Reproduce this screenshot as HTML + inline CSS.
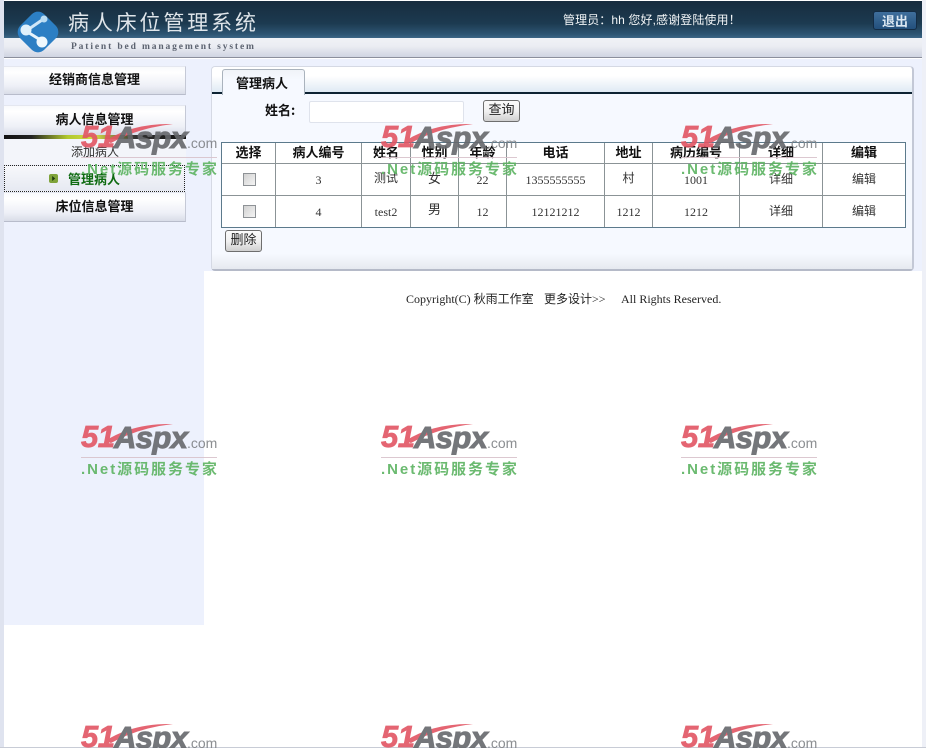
<!DOCTYPE html>
<html><head><meta charset="utf-8"><style>
*{box-sizing:border-box}
html,body{margin:0;padding:0;width:926px;height:748px;overflow:hidden;background:#fff}
body{position:relative;font-family:"Liberation Serif","Noto Serif CJK SC","Noto Sans CJK SC",serif;font-size:12px;color:#222}
.a{position:absolute}
.t{position:absolute;white-space:nowrap;font-family:"Liberation Sans","WenQuanYi Zen Hei","Noto Sans CJK SC",sans-serif}
.m{position:absolute;left:4px;width:182px;background:linear-gradient(#f8f9fc,#fff 20%,#eef0f7 70%,#d9dde8);border-right:1px solid #c5c9d6;border-bottom:1px solid #b8bccb;border-top:1px solid #e4e7f0;text-align:center;font-weight:bold;font-size:13px;color:#111;font-family:"Liberation Sans","Noto Sans CJK SC",sans-serif}
.l{position:absolute;background:#8b9396}
.c{position:absolute;text-align:center;font-size:12px;color:#333;white-space:nowrap;height:16px;line-height:16px;font-family:"Liberation Serif","WenQuanYi Zen Hei","Noto Sans CJK SC",serif}
.h{position:absolute;top:145px;height:16px;line-height:16px;text-align:center;font-weight:bold;font-size:13px;color:#111;white-space:nowrap;font-family:"Liberation Sans","Noto Sans CJK SC",sans-serif}
.cb{position:absolute;width:13px;height:13px;left:243px;background:linear-gradient(135deg,#d2d2d2,#f4f4f4);border:1px solid #8e9296}
.btn{position:absolute;height:22px;border:1px solid #6e6e6e;border-radius:3px;background:linear-gradient(#fbfbfb,#f1f1f1 50%,#cfcfcf);text-align:center;font-size:13px;line-height:16px;color:#222;font-family:"WenQuanYi Zen Hei","Noto Sans CJK SC",sans-serif}
.w{position:absolute;width:142px;height:56px;pointer-events:none;opacity:.9}
.w span{position:absolute;white-space:nowrap;font-family:"Liberation Sans","Noto Sans CJK SC",sans-serif}
.w .n{left:0;top:-5px;font-size:31px;font-weight:bold;font-style:italic;color:#e25563;letter-spacing:-.5px;-webkit-text-stroke:.7px #e25563}
.w .x{left:33px;top:-4px;font-size:31px;font-weight:bold;font-style:italic;color:#66686c;letter-spacing:-.6px;-webkit-text-stroke:1px #66686c}
.w .o{left:106px;top:11px;font-size:14px;color:#7f8286}
.w .g{left:0;top:34px;font-size:15px;font-weight:bold;color:#5cb361;letter-spacing:1.95px}
.w i{position:absolute;left:0;top:33px;width:136px;height:1px;background:#d9c3cc}
.w svg{position:absolute;left:22px;top:-1px}
</style></head><body>
<div class="a" style="left:0;top:0;width:4px;height:748px;background:#dfe3ef"></div>
<div class="a" style="left:922px;top:0;width:4px;height:748px;background:#eef0f7"></div>
<div class="a" style="left:4px;top:59px;width:200px;height:566px;background:#edf1fd"></div>
<div class="a" style="left:204px;top:59px;width:718px;height:212px;background:#edf1fd"></div>
<div class="a" style="left:0;top:747px;width:926px;height:1px;background:#c8ccd6"></div>

<div class="a" style="left:4px;top:1px;width:918px;height:37px;background:linear-gradient(#172c3e,#1c3a50 60%,#2d5573 90%,#3c6686)"></div>
<div class="a" style="left:4px;top:38px;width:918px;height:20px;background:linear-gradient(#f0f2f6,#ebedf3 40%,#cdd2e0)"></div>
<div class="a" style="left:4px;top:57px;width:918px;height:1px;background:#8b8f9c"></div>
<svg class="a" style="left:15px;top:10px" width="46" height="44" viewBox="0 0 46 44">
<rect x="6" y="5" width="34" height="34" rx="9" transform="rotate(45 23 22)" fill="#2c7fc4"/>
<path d="M11 21L30 8" stroke="#cfe6f7" stroke-width="3"/><path d="M11 21L27 31" stroke="#e8f4fb" stroke-width="3"/>
<circle cx="11" cy="20" r="5.5" fill="#dff0fb"/><circle cx="29" cy="9" r="3.5" fill="#b9dcf3"/><circle cx="27" cy="32" r="5.5" fill="#eef8fd"/>
</svg>
<div class="t" style="left:68px;top:9px;font-size:21px;line-height:26px;color:#dfe5ea;letter-spacing:2.85px;font-family:'Noto Sans CJK SC',sans-serif">病人床位管理系统</div>
<div class="t" style="left:71px;top:41px;font-size:9.5px;line-height:12px;color:#5c6370;letter-spacing:1.87px;font-family:'Liberation Serif',serif;font-weight:bold">Patient bed management system</div>
<div class="t" style="left:563px;top:12px;font-size:12px;line-height:16px;color:#f2f5f7;letter-spacing:.1px">管理员：hh 您好,感谢登陆使用！</div>
<div class="a" style="left:873px;top:11px;width:44px;height:19px;border:1px solid #132c45;border-radius:3px;background:linear-gradient(#3f6f9d,#23507c);color:#dce8f2;text-align:center;font-size:13px;line-height:17px;font-weight:bold;font-family:'Noto Sans CJK SC',sans-serif">退出</div>

<div class="m" style="top:66px;height:29px;line-height:25px">经销商信息管理</div>
<div class="m" style="top:105px;height:30px;line-height:27px;border-bottom:0">病人信息管理</div>
<div class="a" style="left:4px;top:135px;width:182px;height:4px;background:linear-gradient(90deg,#111 0,#222 15%,#b2c92e 35%,#d3dc48 50%,#333 72%,#111 100%)"></div>
<div class="a" style="left:4px;top:139px;width:182px;height:26px;background:#f3f5fa"></div>
<div class="t" style="left:71px;top:144px;font-size:12px;line-height:16px;color:#333">添加病人</div>
<div class="a" style="left:4px;top:165px;width:181px;height:27px;border:1px dotted #222;background:linear-gradient(#f7f8fb,#e6e9f2)"></div>
<svg class="a" style="left:49px;top:174px" width="9" height="9" viewBox="0 0 9 9"><rect width="9" height="9" rx="2" fill="#7fa33a"/><path d="M3.2 2L6.2 4.5L3.2 7Z" fill="#1f3a10"/></svg>
<div class="t" style="left:68px;top:170px;font-size:13px;line-height:17px;font-weight:bold;color:#0f6b12;font-family:'Noto Sans CJK SC',sans-serif">管理病人</div>
<div class="m" style="top:192px;height:30px;line-height:27px">床位信息管理</div>

<div class="a" style="left:211px;top:66px;width:703px;height:205px;background:#f6f9ff;border:1px solid #d5d9e4;border-right:2px solid #c3c8d6;border-bottom:2px solid #b5bac8;border-radius:4px"></div>
<div class="a" style="left:212px;top:67px;width:700px;height:25px;background:linear-gradient(#fff,#fff 35%,#dfeaf4);border-radius:3px 3px 0 0"></div>
<div class="a" style="left:212px;top:92px;width:700px;height:2px;background:#0d2333"></div>
<div class="a" style="left:212px;top:254px;width:700px;height:15px;background:linear-gradient(#f6f9ff,#e6e9f0)"></div>
<div class="a" style="left:222px;top:69px;width:83px;height:26px;background:linear-gradient(#f0f3f8,#f6f9ff 40%);border:1px solid #aab3bd;border-bottom:0;border-radius:3px 3px 0 0"></div>
<div class="t" style="left:236px;top:74px;font-size:13px;line-height:17px;font-weight:bold;color:#111;font-family:'Noto Sans CJK SC',sans-serif">管理病人</div>
<div class="t" style="left:265px;top:101px;font-size:13px;line-height:17px;font-weight:bold;color:#111;font-family:'Noto Sans CJK SC',sans-serif">姓名:</div>
<div class="a" style="left:309px;top:101px;width:155px;height:22px;background:#fff;border:1px solid #dfe3ec;border-radius:2px"></div>
<div class="btn" style="left:483px;top:100px;width:37px">查询</div>

<div class="a" style="left:221px;top:142px;width:685px;height:86px;background:#fff;border:1px solid #5c7a8c"></div>
<div class="l" style="left:222px;top:163px;width:683px;height:1px"></div>
<div class="l" style="left:222px;top:195px;width:683px;height:1px"></div>
<div class="l" style="left:275px;top:143px;width:1px;height:84px"></div>
<div class="l" style="left:361px;top:143px;width:1px;height:84px"></div>
<div class="l" style="left:410px;top:143px;width:1px;height:84px"></div>
<div class="l" style="left:458px;top:143px;width:1px;height:84px"></div>
<div class="l" style="left:506px;top:143px;width:1px;height:84px"></div>
<div class="l" style="left:604px;top:143px;width:1px;height:84px"></div>
<div class="l" style="left:652px;top:143px;width:1px;height:84px"></div>
<div class="l" style="left:739px;top:143px;width:1px;height:84px"></div>
<div class="l" style="left:822px;top:143px;width:1px;height:84px"></div>

<div class="h" style="left:222px;width:53px">选择</div>
<div class="h" style="left:276px;width:85px">病人编号</div>
<div class="h" style="left:362px;width:48px">姓名</div>
<div class="h" style="left:411px;width:47px">性别</div>
<div class="h" style="left:459px;width:47px">年龄</div>
<div class="h" style="left:507px;width:97px">电话</div>
<div class="h" style="left:605px;width:47px">地址</div>
<div class="h" style="left:653px;width:86px">病历编号</div>
<div class="h" style="left:740px;width:82px">详细</div>
<div class="h" style="left:823px;width:82px">编辑</div>

<div class="cb" style="top:173px"></div>
<div class="c" style="left:276px;width:85px;top:172px">3</div>
<div class="c" style="left:362px;width:48px;top:170px">测试</div>
<div class="c" style="left:411px;width:47px;top:171px;font-size:13px">女</div>
<div class="c" style="left:459px;width:47px;top:172px">22</div>
<div class="c" style="left:507px;width:97px;top:172px">1355555555</div>
<div class="c" style="left:605px;width:47px;top:170px">村</div>
<div class="c" style="left:653px;width:86px;top:172px">1001</div>
<div class="c" style="left:740px;width:82px;top:171px">详细</div>
<div class="c" style="left:823px;width:82px;top:171px">编辑</div>

<div class="cb" style="top:205px"></div>
<div class="c" style="left:276px;width:85px;top:204px">4</div>
<div class="c" style="left:362px;width:48px;top:204px">test2</div>
<div class="c" style="left:411px;width:47px;top:202px;font-size:13px">男</div>
<div class="c" style="left:459px;width:47px;top:204px">12</div>
<div class="c" style="left:507px;width:97px;top:204px">12121212</div>
<div class="c" style="left:605px;width:47px;top:204px">1212</div>
<div class="c" style="left:653px;width:86px;top:204px">1212</div>
<div class="c" style="left:740px;width:82px;top:203px">详细</div>
<div class="c" style="left:823px;width:82px;top:203px">编辑</div>

<div class="btn" style="left:225px;top:230px;width:37px">删除</div>

<div class="t" style="left:406px;top:291px;font-size:12px;line-height:16px;color:#222;font-family:'Liberation Serif','WenQuanYi Zen Hei','Noto Sans CJK SC',serif">Copyright(C) 秋雨工作室</div>
<div class="t" style="left:544px;top:291px;font-size:12px;line-height:16px;color:#222;font-family:'Liberation Serif','WenQuanYi Zen Hei','Noto Sans CJK SC',serif">更多设计&gt;&gt;</div>
<div class="t" style="left:621px;top:291px;font-size:12px;line-height:16px;color:#222;font-family:'Liberation Serif',serif">All Rights Reserved.</div>

<div class="w" style="left:81px;top:124px"><svg width="80" height="20"><path d="M2 18Q30 0 70 1Q35 5 8 20Z" fill="#e25563"/></svg><span class="n">51</span><span class="x">Aspx</span><span class="o">.com</span><i></i><span class="g">.Net源码服务专家</span></div>
<div class="w" style="left:381px;top:124px"><svg width="80" height="20"><path d="M2 18Q30 0 70 1Q35 5 8 20Z" fill="#e25563"/></svg><span class="n">51</span><span class="x">Aspx</span><span class="o">.com</span><i></i><span class="g">.Net源码服务专家</span></div>
<div class="w" style="left:681px;top:124px"><svg width="80" height="20"><path d="M2 18Q30 0 70 1Q35 5 8 20Z" fill="#e25563"/></svg><span class="n">51</span><span class="x">Aspx</span><span class="o">.com</span><i></i><span class="g">.Net源码服务专家</span></div>
<div class="w" style="left:81px;top:424px"><svg width="80" height="20"><path d="M2 18Q30 0 70 1Q35 5 8 20Z" fill="#e25563"/></svg><span class="n">51</span><span class="x">Aspx</span><span class="o">.com</span><i></i><span class="g">.Net源码服务专家</span></div>
<div class="w" style="left:381px;top:424px"><svg width="80" height="20"><path d="M2 18Q30 0 70 1Q35 5 8 20Z" fill="#e25563"/></svg><span class="n">51</span><span class="x">Aspx</span><span class="o">.com</span><i></i><span class="g">.Net源码服务专家</span></div>
<div class="w" style="left:681px;top:424px"><svg width="80" height="20"><path d="M2 18Q30 0 70 1Q35 5 8 20Z" fill="#e25563"/></svg><span class="n">51</span><span class="x">Aspx</span><span class="o">.com</span><i></i><span class="g">.Net源码服务专家</span></div>
<div class="w" style="left:81px;top:724px"><svg width="80" height="20"><path d="M2 18Q30 0 70 1Q35 5 8 20Z" fill="#e25563"/></svg><span class="n">51</span><span class="x">Aspx</span><span class="o">.com</span></div>
<div class="w" style="left:381px;top:724px"><svg width="80" height="20"><path d="M2 18Q30 0 70 1Q35 5 8 20Z" fill="#e25563"/></svg><span class="n">51</span><span class="x">Aspx</span><span class="o">.com</span></div>
<div class="w" style="left:681px;top:724px"><svg width="80" height="20"><path d="M2 18Q30 0 70 1Q35 5 8 20Z" fill="#e25563"/></svg><span class="n">51</span><span class="x">Aspx</span><span class="o">.com</span></div>
</body></html>
